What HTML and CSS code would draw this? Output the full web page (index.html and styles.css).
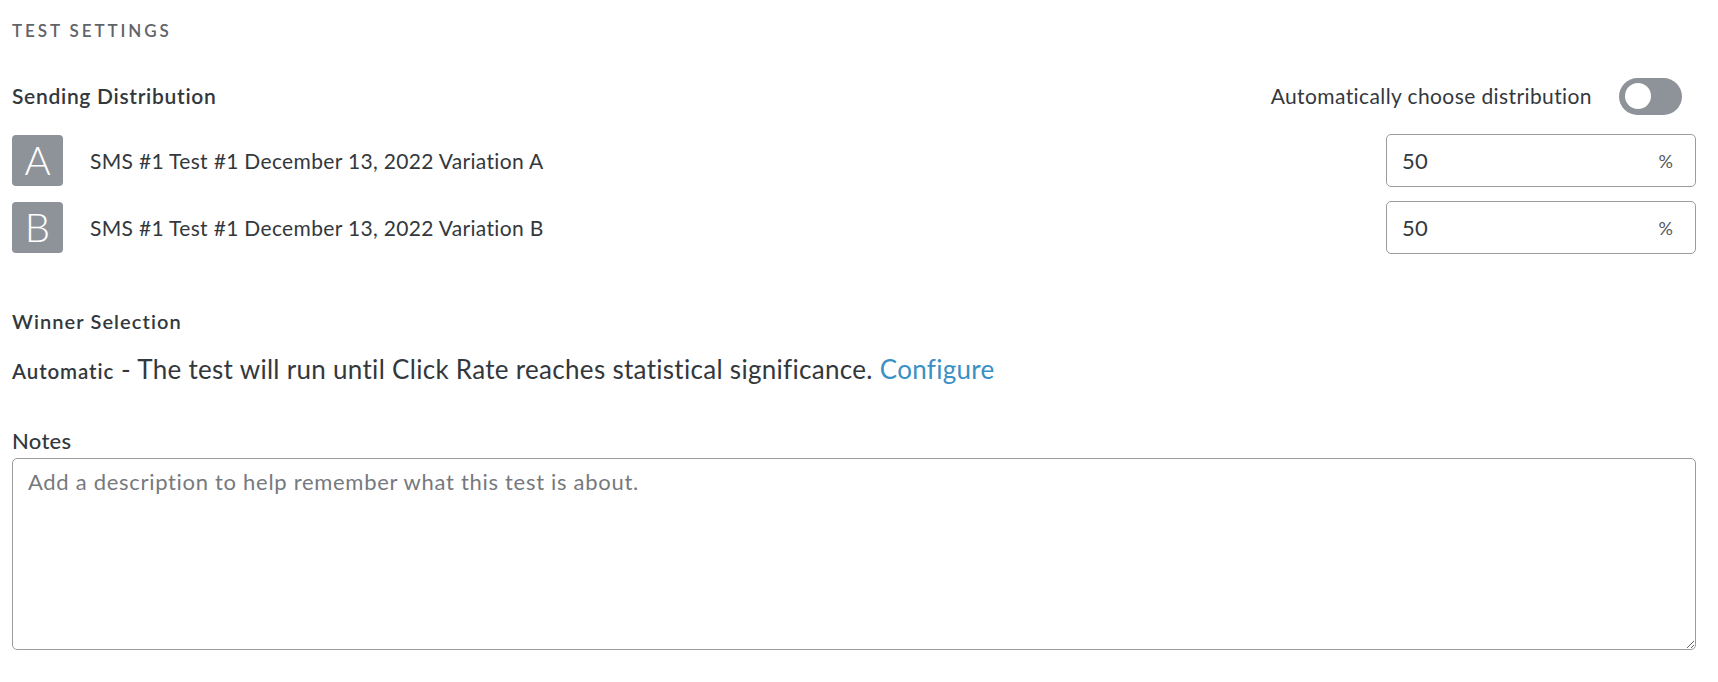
FILE: index.html
```html
<!DOCTYPE html>
<html lang="en">
<head>
<meta charset="utf-8">
<title>Test Settings</title>
<link rel="stylesheet" href="styles.css">
</head>
<body>
<main class="page">
  <h2 class="section-title">TEST SETTINGS</h2>

  <div class="dist-header">
    <h3 class="label">Sending Distribution</h3>
    <div class="auto-choose">
      <span class="auto-text">Automatically choose distribution</span>
      <span class="toggle" role="switch" aria-checked="false"><span class="knob"></span></span>
    </div>
  </div>

  <div class="variations">
    <div class="variation">
      <span class="badge">A</span>
      <span class="var-name">SMS #1 Test #1 December 13, 2022 Variation A</span>
      <label class="pct-field">
        <input class="pct-input" type="text" value="50">
        <span class="pct-sign">%</span>
      </label>
    </div>
    <div class="variation">
      <span class="badge">B</span>
      <span class="var-name">SMS #1 Test #1 December 13, 2022 Variation B</span>
      <label class="pct-field">
        <input class="pct-input" type="text" value="50">
        <span class="pct-sign">%</span>
      </label>
    </div>
  </div>

  <h3 class="label winner-label">Winner Selection</h3>
  <p class="winner-line"><strong class="winner-mode">Automatic</strong> - The test will run until Click Rate reaches statistical significance. <a class="link" href="#">Configure</a></p>

  <label class="notes-label" for="notes">Notes</label>
  <textarea id="notes" class="notes" placeholder="Add a description to help remember what this test is about."></textarea>
</main>
</body>
</html>
```

FILE: styles.css
```css
* { box-sizing: border-box; }

html, body {
  margin: 0;
  padding: 0;
  background: #ffffff;
}

body {
  font-family: Lato, "Noto Sans", "Liberation Sans", sans-serif;
  color: #33383d;
}

.page {
  padding: 20px 22px 0 12px;
  display: flex;
  flex-direction: column;
}

.section-title {
  margin: 0;
  font-size: 17px;
  line-height: 21px;
  font-weight: 600;
  letter-spacing: 2.9px;
  color: #5f646a;
}

.dist-header {
  margin-top: 36px;
  height: 38px;
  display: flex;
  align-items: center;
  justify-content: space-between;
}

.label {
  margin: 0;
  font-size: 21px;
  line-height: 26px;
  font-weight: 600;
  letter-spacing: 0.7px;
  color: #33383d;
}

.auto-choose {
  display: flex;
  align-items: center;
  gap: 27px;
  padding-right: 14px;
}

.auto-text {
  font-size: 21px;
  line-height: 26px;
  letter-spacing: 0.4px;
  color: #33383d;
}

.toggle {
  width: 63px;
  height: 37px;
  border-radius: 19px;
  background: #8e939a;
  display: flex;
  align-items: center;
  padding-left: 6px;
}

.knob {
  width: 26px;
  height: 26px;
  border-radius: 50%;
  background: #ffffff;
}

.variations {
  margin-top: 19px;
  display: flex;
  flex-direction: column;
  gap: 14px;
}

.variation {
  height: 53px;
  display: flex;
  align-items: center;
}

.badge {
  width: 51px;
  height: 51px;
  border-radius: 4px;
  background: #8e939a;
  color: #ffffff;
  font-size: 40px;
  font-weight: 300;
  line-height: 51px;
  text-align: center;
  flex: none;
}

.var-name {
  margin-left: 27px;
  font-size: 21px;
  line-height: 26px;
  letter-spacing: 0.33px;
  flex: 1;
}

.pct-field {
  width: 310px;
  height: 53px;
  border: 1px solid #9c9c9c;
  border-radius: 5px;
  display: flex;
  align-items: center;
  padding: 0 22px 0 15px;
  flex: none;
}

.pct-input {
  flex: 1;
  min-width: 0;
  border: 0;
  outline: 0;
  padding: 0;
  background: transparent;
  font-family: inherit;
  font-size: 22px;
  letter-spacing: 0.3px;
  color: #33383d;
}

.pct-sign {
  font-size: 18px;
  color: #55595e;
}

.winner-label {
  margin-top: 55px;
  font-size: 20px;
  line-height: 24px;
  letter-spacing: 1.1px;
}

.winner-line {
  margin: 21px 0 0;
  font-size: 26px;
  line-height: 30px;
  letter-spacing: 0.3px;
  color: #33383d;
}

.winner-mode {
  font-size: 20.5px;
  font-weight: 600;
  letter-spacing: 0.9px;
}

.link {
  color: #3a8fc4;
  text-decoration: none;
}

.notes-label {
  margin-top: 43px;
  font-size: 22px;
  line-height: 24px;
  font-weight: 500;
  letter-spacing: 0.3px;
  color: #33383d;
}

.notes {
  margin-top: 5px;
  width: 100%;
  height: 192px;
  border: 1px solid #9c9c9c;
  border-radius: 5px;
  padding: 10px 15px;
  font-family: inherit;
  font-size: 22px;
  line-height: 26px;
  letter-spacing: 0.7px;
  color: #33383d;
  resize: vertical;
  outline: 0;
}

.notes::placeholder {
  color: #76797d;
}
```
